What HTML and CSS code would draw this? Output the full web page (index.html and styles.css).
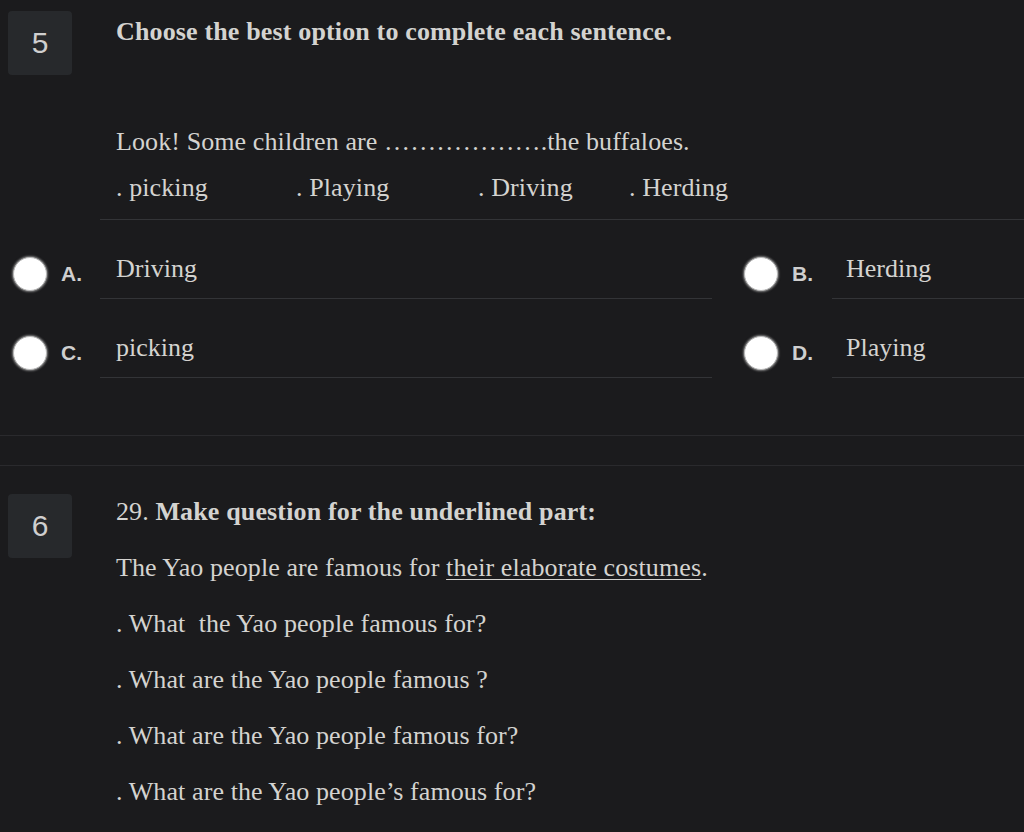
FILE: index.html
```html
<!DOCTYPE html>
<html lang="en">
<head>
<meta charset="utf-8">
<title>Quiz</title>
<link rel="stylesheet" href="styles.css">
</head>
<body>
<section class="question q5">
  <div class="q-head">
    <div class="badge">5</div>
    <div class="stem">
      <p class="title"><strong>Choose the best option to complete each sentence.</strong></p>
      <p class="sentence">Look! Some children are ……………….the buffaloes.</p>
      <div class="choices">
        <span class="c1">. picking</span>
        <span class="c2">. Playing</span>
        <span class="c3">. Driving</span>
        <span class="c4">. Herding</span>
      </div>
    </div>
  </div>
  <div class="answers">
    <div class="answer col-left">
      <div class="pick"><span class="radio"></span><span class="letter">A.</span></div>
      <div class="answer-text">Driving</div>
    </div>
    <div class="answer col-right">
      <div class="pick"><span class="radio"></span><span class="letter">B.</span></div>
      <div class="answer-text">Herding</div>
    </div>
    <div class="answer col-left">
      <div class="pick"><span class="radio"></span><span class="letter">C.</span></div>
      <div class="answer-text">picking</div>
    </div>
    <div class="answer col-right">
      <div class="pick"><span class="radio"></span><span class="letter">D.</span></div>
      <div class="answer-text">Playing</div>
    </div>
  </div>
</section>

<section class="question q6">
  <div class="q-head">
    <div class="badge">6</div>
    <div class="stem">
      <p class="title">29. <strong>Make question for the underlined part:</strong></p>
      <p class="line">The Yao people are famous for <u>their elaborate costumes</u>.</p>
      <p class="line">. What&nbsp; the Yao people famous for?</p>
      <p class="line">. What are the Yao people famous ?</p>
      <p class="line">. What are the Yao people famous for?</p>
      <p class="line">. What are the Yao people’s famous for?</p>
    </div>
  </div>
</section>
</body>
</html>
```

FILE: styles.css
```css
html, body {
  margin: 0;
  padding: 0;
  background: #1b1b1d;
}

body {
  width: 1024px;
  height: 832px;
  overflow: hidden;
  color: #d4d3d0;
  font-family: "Liberation Serif", "Times New Roman", serif;
  font-size: 26px;
}

p {
  margin: 0;
}

.question {
  display: flex;
  flex-direction: column;
}

.q5 {
  padding-top: 11px;
  padding-bottom: 57px;
  border-bottom: 1px solid #2a2a2d;
}

.q6 {
  margin-top: 29px;
  border-top: 1px solid #2a2a2d;
  padding-top: 28px;
}

.q-head {
  display: flex;
  align-items: flex-start;
}

.badge {
  flex: 0 0 64px;
  height: 64px;
  margin-left: 8px;
  margin-right: 28px;
  background: #27292c;
  border-radius: 4px;
  display: flex;
  align-items: center;
  justify-content: center;
  font-family: "Liberation Sans", Arial, sans-serif;
  font-size: 30px;
  color: #cfcfcf;
}

.stem {
  flex: 1;
  padding-top: 6px;
}

.stem p,
.choices {
  padding-left: 16px;
  line-height: 30px;
  letter-spacing: 0.1px;
}

.title strong {
  letter-spacing: 0.15px;
}

.q5 .stem {
  border-bottom: 1px solid #333437;
  padding-bottom: 16px;
}

.sentence {
  margin-top: 80px !important;
}

.choices {
  display: flex;
  margin-top: 16px;
}

.c1 { width: 180px; }
.c2 { width: 182px; }
.c3 { width: 151px; }

.q6 .stem {
  padding-top: 3px;
}

.q6 .line {
  margin-top: 26px;
}

.q6 u {
  text-decoration-thickness: 1px;
  text-underline-offset: 3px;
}

.answers {
  display: grid;
  grid-template-columns: 712px 1fr;
}

.answer {
  display: flex;
  align-items: stretch;
}

.pick {
  display: flex;
  align-items: flex-start;
  box-sizing: border-box;
}

.col-left .pick {
  width: 100px;
  padding-left: 13px;
}

.col-right .pick {
  width: 120px;
  padding-left: 32px;
}

.radio {
  flex: 0 0 auto;
  width: 32px;
  height: 32px;
  margin-top: 37px;
  border-radius: 50%;
  background: #ffffff;
  border: 1px solid #b8b8b8;
  box-shadow: 0 0 2px 1px rgba(150, 150, 150, 0.8);
}

.letter {
  margin-left: 14px;
  margin-top: 42px;
  font-family: "Liberation Sans", Arial, sans-serif;
  font-weight: bold;
  font-size: 21px;
  line-height: 24px;
  color: #cfcfcf;
}

.answer-text {
  flex: 1;
  padding: 34px 16px 14px;
  line-height: 30px;
  border-bottom: 1px solid #333437;
}

.col-right .answer-text {
  padding-left: 14px;
}
```
